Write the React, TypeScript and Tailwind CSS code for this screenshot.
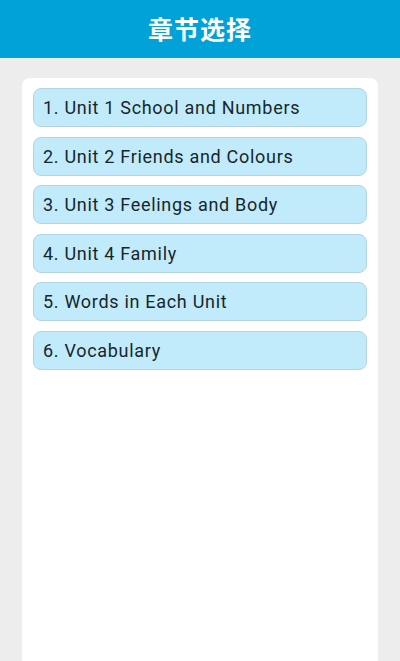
const chapters = [
  "1. Unit 1 School and Numbers",
  "2. Unit 2 Friends and Colours",
  "3. Unit 3 Feelings and Body",
  "4. Unit 4 Family",
  "5. Words in Each Unit",
  "6. Vocabulary",
];

export default function App() {
  return (
    <div className="h-[661px] flex flex-col bg-[#ededed] font-['Roboto','Noto_Sans_CJK_SC',sans-serif]">
      <header className="h-[58px] shrink-0 bg-[#00a2d8] flex items-center justify-center">
        <h1 className="text-[25px] font-bold text-white tracking-[1px] font-['Noto_Sans_CJK_SC',sans-serif]">章节选择</h1>
      </header>
      <div className="flex-1 px-[22px] pt-[20px]">
        <div className="h-full bg-white rounded-t-lg px-[11px] pt-[10px] flex flex-col gap-[9.6px]">
          {chapters.map((c) => (
            <div
              key={c}
              className="h-[39px] flex items-center pl-[9px] bg-[#c1ebfb] border border-[#b3d5e1] rounded-lg text-[18px] tracking-[0.7px] text-[#17262c]"
            >
              {c}
            </div>
          ))}
        </div>
      </div>
    </div>
  );
}
